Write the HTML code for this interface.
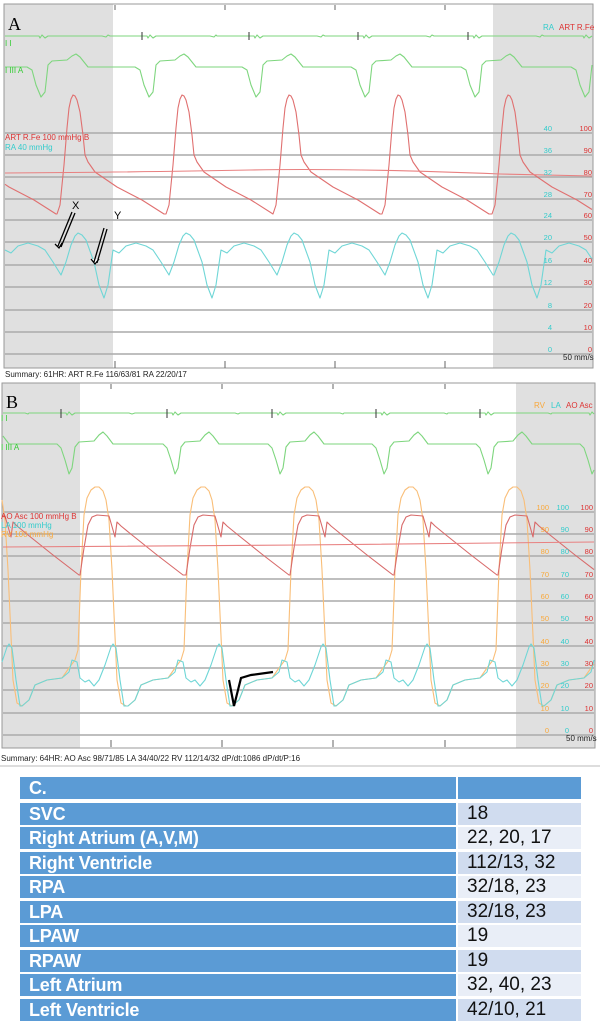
<!DOCTYPE html>
<html><head><meta charset="utf-8">
<style>
html,body{margin:0;padding:0;background:#fff;width:600px;height:1031px;overflow:hidden;font-family:"Liberation Sans",sans-serif}
svg{position:absolute;left:0;top:0}
.t{position:absolute;left:20px;width:562px}
.row{position:absolute;left:0;height:22px;width:562px}
.l{position:absolute;left:0;width:436px;height:22px;background:#5b9bd5;color:#fff;font-weight:bold;font-size:18px;line-height:22px;padding-left:9px;box-sizing:border-box;letter-spacing:-0.2px}
.r{position:absolute;left:438px;width:123px;height:22px;font-size:19px;line-height:22px;padding-left:9px;box-sizing:border-box;color:#111}
</style></head><body>
<svg id="s" width="600" height="770" viewBox="0 0 600 770" xmlns="http://www.w3.org/2000/svg">
<rect x="4" y="4" width="589" height="364" fill="#fff" stroke="#999"/>
<rect x="4.5" y="4.5" width="108.5" height="363" fill="#e0e0e0"/>
<rect x="493" y="4.5" width="99.5" height="363" fill="#e0e0e0"/>
<rect x="2" y="383" width="593" height="365" fill="#fff" stroke="#999"/>
<rect x="2.5" y="383.5" width="77.5" height="364" fill="#e0e0e0"/>
<rect x="516" y="383.5" width="78.5" height="364" fill="#e0e0e0"/>
<g id="grid" stroke="#aaa" stroke-width="1.5"></g>
<g id="traces" fill="none" stroke-width="1.1"></g>
<text x="8" y="30" font-family="Liberation Serif" font-size="18">A</text>
<text x="6" y="408" font-family="Liberation Serif" font-size="18">B</text>
<g font-size="8" font-family="Liberation Sans">
<text x="5" y="46" fill="#3c3">I I</text>
<text x="5" y="73" fill="#3c3">I III  A</text>
<text x="5" y="140" fill="#d33">ART R.Fe  100 mmHg   B</text>
<text x="5" y="150" fill="#3cc">RA  40 mmHg</text>
<text x="543" y="30" fill="#3cc">RA</text><text x="559" y="30" fill="#d33">ART R.Fe</text>
<text x="563" y="360" fill="#222">50 mm/s</text>
<text x="5" y="377" fill="#222">Summary:  61HR: ART R.Fe 116/63/81 RA 22/20/17</text>
<text x="1" y="421" fill="#3c3">I I</text>
<text x="1" y="450" fill="#3c3">I III  A</text>
<text x="1" y="519" fill="#d33">AO Asc  100 mmHg   B</text>
<text x="1" y="528" fill="#3cc">LA  100 mmHg</text>
<text x="1" y="537" fill="#f9a83c">RV  100 mmHg</text>
<text x="534" y="408" fill="#f9a83c">RV</text><text x="551" y="408" fill="#3cc">LA</text><text x="566" y="408" fill="#d33">AO Asc</text>
<text x="566" y="741" fill="#222">50 mm/s</text>
<text x="1" y="761" fill="#222">Summary:  64HR: AO Asc 98/71/85 LA 34/40/22 RV 112/14/32 dP/dt:1086 dP/dt/P:16</text>
</g>
<g id="lab" font-size="7.5" text-anchor="end"></g>
<g stroke="#000" stroke-width="1.3" fill="#fff">
<path d="M72 212 L58 246 M75 213 L61 247 M55 244 L59 248 L62 243"/>
<path d="M104 228 L94 262 M107 229 L97 263 M91 259 L95 264 L99 259"/>
</g>
<text x="72" y="209" font-size="11">X</text>
<text x="114" y="219" font-size="11">Y</text>
<path d="M229 680 L234 706 L241 678 L251 675 L273 672" fill="none" stroke="#000" stroke-width="2.2"/>
<line x1="0" y1="766" x2="600" y2="766" stroke="#ddd" stroke-width="2"/>
</svg>
<div class="t" style="top:777px">
<div class="row" style="top:0"><div class="l">C.</div><div class="r" style="background:#5b9bd5"></div></div>
<div class="row" style="top:26px"><div class="l">SVC</div><div class="r" style="background:#d0dcef">18</div></div>
<div class="row" style="top:50px"><div class="l">Right Atrium (A,V,M)</div><div class="r" style="background:#e9eef7">22, 20, 17</div></div>
<div class="row" style="top:75px"><div class="l">Right Ventricle</div><div class="r" style="background:#d0dcef">112/13, 32</div></div>
<div class="row" style="top:99px"><div class="l">RPA</div><div class="r" style="background:#e9eef7">32/18, 23</div></div>
<div class="row" style="top:124px"><div class="l">LPA</div><div class="r" style="background:#d0dcef">32/18, 23</div></div>
<div class="row" style="top:148px"><div class="l">LPAW</div><div class="r" style="background:#e9eef7">19</div></div>
<div class="row" style="top:173px"><div class="l">RPAW</div><div class="r" style="background:#d0dcef">19</div></div>
<div class="row" style="top:197px"><div class="l">Left Atrium</div><div class="r" style="background:#e9eef7">32, 40, 23</div></div>
<div class="row" style="top:222px"><div class="l">Left Ventricle</div><div class="r" style="background:#d0dcef">42/10, 21</div></div>
</div>
<script>
var NS="http://www.w3.org/2000/svg";
function el(p,t,a,txt){var e=document.createElementNS(NS,t);for(var k in a)e.setAttribute(k,a[k]);if(txt!=null)e.textContent=txt;document.getElementById(p).appendChild(e);}
var gA=[133,155,177,199,220,242,265,287,310,332,354];
gA.forEach(function(y){el("grid","line",{x1:5,x2:592,y1:y,y2:y});});
var gB=[512,534,556,579,601,623,646,668,690,713,735];
gB.forEach(function(y){el("grid","line",{x1:3,x2:594,y1:y,y2:y});});
var cy=[40,36,32,28,24,20,16,12,8,4,0],rd=[100,90,80,70,60,50,40,30,20,10,0];
gA.forEach(function(y,i){el("lab","text",{x:552,y:y-2,fill:"#3cc"},cy[i]);el("lab","text",{x:592,y:y-2,fill:"#d33"},rd[i]);});
gB.forEach(function(y,i){el("lab","text",{x:549,y:y-2,fill:"#f9a83c"},rd[i]);el("lab","text",{x:569,y:y-2,fill:"#3cc"},rd[i]);el("lab","text",{x:593,y:y-2,fill:"#d33"},rd[i]);});
[115,225,335,445].forEach(function(x){el("grid","line",{x1:x,x2:x,y1:5,y2:10,"stroke-width":1,stroke:"#666"});el("grid","line",{x1:x,x2:x,y1:361,y2:368,"stroke-width":1,stroke:"#666"});});
[111,222,333,445].forEach(function(x){el("grid","line",{x1:x,x2:x,y1:384,y2:389,"stroke-width":1,stroke:"#666"});el("grid","line",{x1:x,x2:x,y1:740,y2:747,"stroke-width":1,stroke:"#666"});});
function per(shape,starts,x0,x1){var all=[],pts=[];starts.forEach(function(s){shape.forEach(function(p){all.push([s+p[0],p[1]]);});});all.sort(function(a,b){return a[0]-b[0]});
function yat(x){for(var i=1;i<all.length;i++){if(all[i][0]>=x){var a=all[i-1],b=all[i];var t=(x-a[0])/((b[0]-a[0])||1);return a[1]+(b[1]-a[1])*t;}}return all[all.length-1][1];}
pts.push([x0,yat(x0)]);all.forEach(function(p){if(p[0]>x0&&p[0]<x1)pts.push(p);});pts.push([x1,yat(x1)]);
return "M"+pts.map(function(p){return p[0].toFixed(1)+" "+p[1].toFixed(1)}).join(" L");}
function tr(d,c,w){el("traces","path",{d:d,stroke:c,"stroke-width":w||1.1,"stroke-linejoin":"round"});}
var G="#7ed67e";
var dA=[-66,42,150,257,366,476,586,694];
tr(per([[-40,36],[-3,36],[-2,38],[0,35],[3,38],[6,36],[60,36],[64,37],[66,35],[68,36]],dA,5,592),G);
tr(per([[-35,67],[-15,67],[-10,70],[-6,85],[-1,97],[3,92],[6,65],[10,61],[25,60],[30,56],[34,54],[38,57],[42,62],[46,67]],dA,5,592),G);
dA.forEach(function(d){if(d>60&&d<480)el("traces","line",{x1:d-8,x2:d-8,y1:32,y2:40,stroke:"#333","stroke-width":1});});
var tA=[-51,57,166,273,382,492,600];
tr(per([[0,214],[3,205],[7,165],[10,128],[12,108],[14,99],[16,95],[18,96],[20,100],[23,112],[26,135],[28,155],[31,162],[38,172],[60,187],[85,200],[107,214]],tA,5,592),"#e07070");
tr("M5 173 Q150 172 250 170 T500 174 L592 176","#e88080");
var xA=[-47,61,169,277,385,494,602];
tr(per([[0,275],[5,262],[10,245],[14,236],[17,233],[21,235],[25,240],[33,262],[38,285],[43,298],[47,285],[52,250],[58,253],[65,246],[75,243],[85,246],[92,250],[100,262],[108,275]],xA,5,592),"#6fd6d6");
var dB=[-35,69,175,280,384,488,592,696];
tr(per([[-40,413],[-3,413],[-2,415],[0,412],[3,415],[6,413],[60,413],[63,414]],dB,3,594),G);
tr(per([[-35,444],[-12,444],[-8,448],[-4,460],[0,474],[3,468],[6,447],[10,442],[25,441],[30,435],[34,432],[38,436],[44,444],[64,444]],dB,3,594),G);
dB.forEach(function(d){if(d>60&&d<500)el("traces","line",{x1:d-8,x2:d-8,y1:409,y2:418,stroke:"#333","stroke-width":1});});
var pB=[-111,-7,97,203,307,411,515,619];
tr(per([[-75,706],[-68,700],[-62,685],[-50,680],[-35,678],[-28,668],[-22,660],[-19,650],[-16,570],[-13,515],[-10,498],[-6,490],[-2,487],[2,487],[6,491],[9,500],[12,520],[15,570],[20,680],[24,703],[29,706]],pB,2,594),"#f9be78");
tr(per([[-75,706],[-68,700],[-62,685],[-50,680],[-35,678],[-28,672],[-25,660],[-20,662],[-17,678],[-12,682],[-8,680],[-3,686],[2,680],[8,665],[14,647],[16,644],[19,648],[23,680],[27,706]],pB,2,594),"#6fd6d6");
tr(per([[-17,575],[-13,548],[-9,525],[-5,517],[0,515],[12,516],[16,530],[18,537],[20,522],[24,526],[35,535],[60,555],[86,575]],pB,2,594),"#d86a6a");
tr("M3 547 L300 545 L594 542","#e88080");
</script>
</body></html>
